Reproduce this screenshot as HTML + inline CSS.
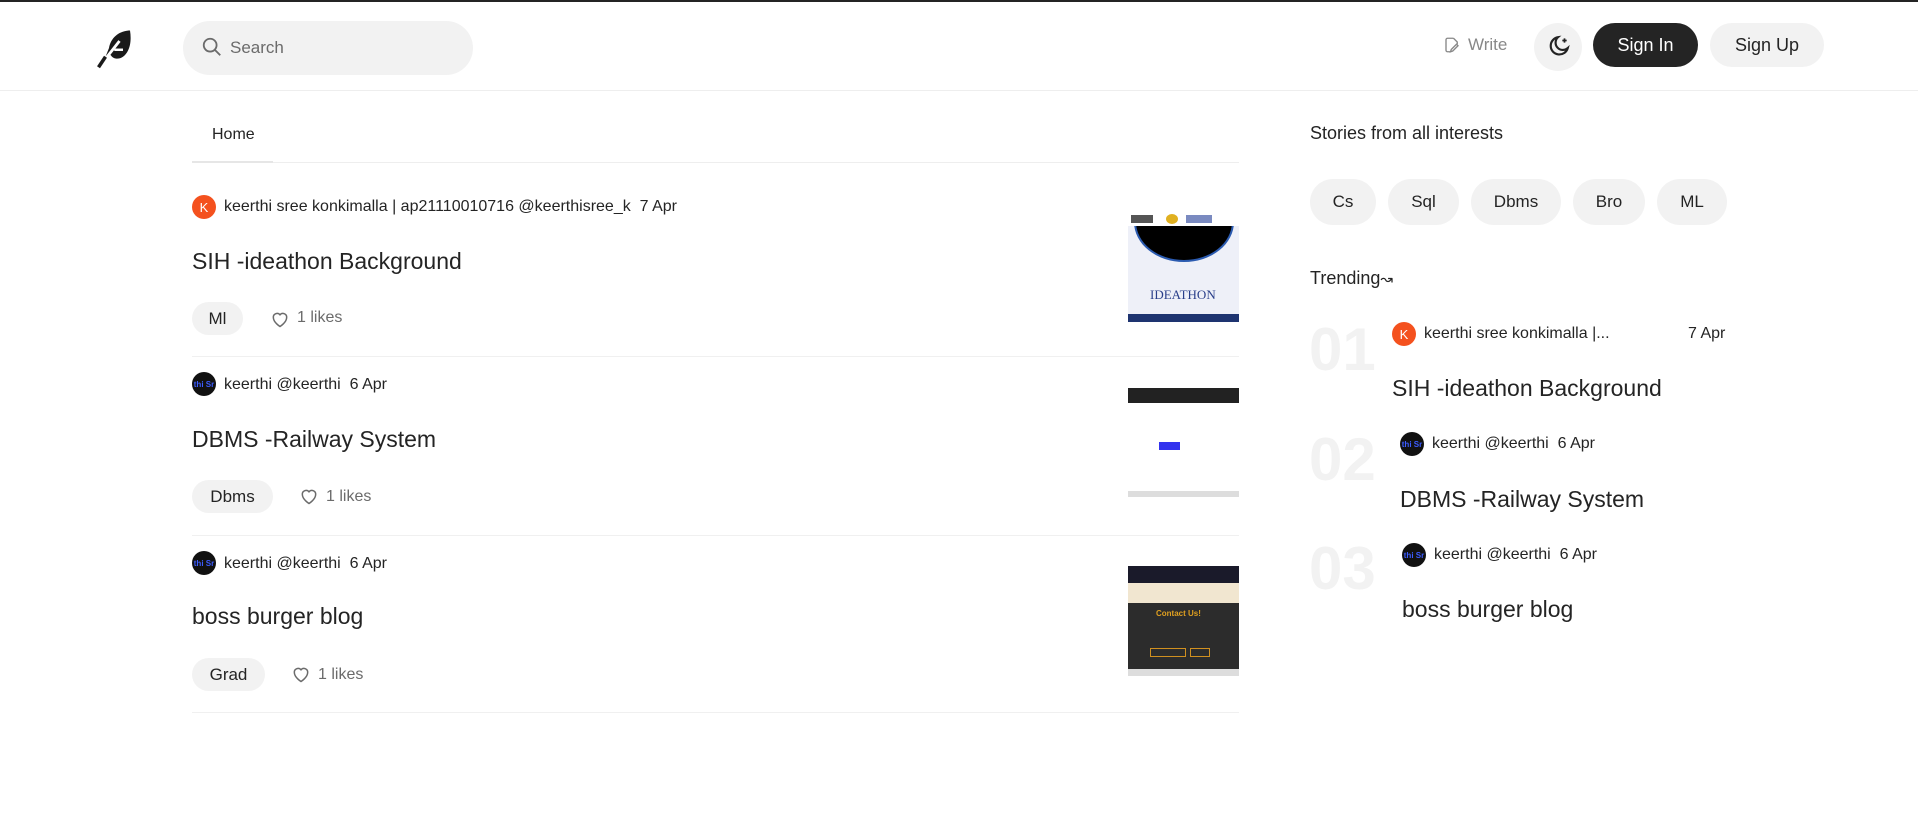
<!DOCTYPE html>
<html><head><meta charset="utf-8"><style>
*{margin:0;padding:0;box-sizing:border-box}
body{width:1918px;height:840px;background:#fff;font-family:"Liberation Sans",sans-serif;color:#242424;position:relative;overflow:hidden}
.a{position:absolute;white-space:nowrap}
.pill{position:absolute;background:#f2f2f2;border-radius:24px;display:flex;align-items:center;justify-content:center;color:#242424}
.av{position:absolute;width:24px;height:24px;border-radius:50%}
.k{background:#f4511e;color:#fff;font-size:13px;display:flex;align-items:center;justify-content:center}
.d{background:#111;color:#3c5cff;font-size:8px;font-weight:bold;display:flex;align-items:center;justify-content:center;overflow:hidden}
.meta{font-size:16px;color:#242424}
.title{font-size:23px;color:#242424}
.sep{position:absolute;left:192px;width:1047px;height:1px;background:#f0f0f0}
.big{position:absolute;font-size:60px;font-weight:bold;color:#f2f2f2;left:1309px}
</style></head><body>
<div class="a" style="left:0;top:0;width:1918px;height:2px;background:#242424"></div>
<svg class="a" style="left:95px;top:27px" width="42" height="42" viewBox="0 0 24 24"><path d="M20 2c-6 0-11 4-12 10l-2 5 3-1c1 2 4 3 7 1 4-3 5-9 4-15z" fill="#1a1a1a"/><path d="M3 22 L14 8" stroke="#fff" stroke-width="1.6"/><path d="M2 23 L6 17" stroke="#1a1a1a" stroke-width="2"/><path d="M11 13h5" stroke="#fff" stroke-width="1.4"/></svg>
<div class="a" style="left:183px;top:21px;width:290px;height:54px;border-radius:27px;background:#f2f2f2"></div>
<svg class="a" style="left:201px;top:36px" width="22" height="22" viewBox="0 0 24 24" fill="none" stroke="#6b6b6b" stroke-width="2"><circle cx="10" cy="10" r="7"/><path d="M15 15l6 6"/></svg>
<div class="a" style="left:230px;top:38px;font-size:17px;color:#6b6b6b">Search</div>
<svg class="a" style="left:1443px;top:35px" width="18" height="20" viewBox="0 0 24 24" fill="none" stroke="#888" stroke-width="1.8"><path d="M14 3H6a2 2 0 0 0-2 2v14a2 2 0 0 0 2 2h4"/><path d="M14 3l5 5v3"/><path d="M20 13l-7 7-3 1 1-3 7-7z"/></svg>
<div class="a" style="left:1468px;top:35px;font-size:17px;color:#888">Write</div>
<div class="a" style="left:1534px;top:23px;width:48px;height:48px;border-radius:50%;background:#f2f2f2"></div>
<svg class="a" style="left:1545px;top:34px" width="26" height="26" viewBox="0 0 24 24" fill="none" stroke="#242424" stroke-width="2"><path d="M12 3a8 8 0 1 0 9 10 6 6 0 0 1-9-10z"/><path d="M18 4v4M16 6h4" stroke-width="1.6"/></svg>
<div class="pill" style="left:1593px;top:23px;width:105px;height:44px;background:#242424;color:#fff;font-size:18px">Sign In</div>
<div class="pill" style="left:1710px;top:23px;width:114px;height:44px;font-size:18px">Sign Up</div>
<div class="a" style="left:0;top:90px;width:1918px;height:1px;background:#eee"></div>

<div class="a" style="left:212px;top:126px;font-size:16px">Home</div>
<div class="a" style="left:192px;top:162px;width:1047px;height:1px;background:#eee"></div>
<div class="a" style="left:192px;top:161px;width:81px;height:2px;background:#e6e6e6"></div>

<div class="av k" style="left:192px;top:195px">K</div>
<div class="a meta" style="left:224px;top:198px">keerthi sree konkimalla | ap21110010716 @keerthisree_k&nbsp; 7 Apr</div>
<div class="a title" style="left:192px;top:248px">SIH -ideathon Background</div>
<div class="pill" style="left:192px;top:302px;width:51px;height:33px;font-size:17px">Ml</div>
<svg class="a" style="left:270px;top:309px" width="20" height="20" viewBox="0 0 24 24" fill="none" stroke="#6b6b6b" stroke-width="1.8"><path d="M12 21s-8-5-8-11a4.5 4.5 0 0 1 8-3 4.5 4.5 0 0 1 8 3c0 6-8 11-8 11z"/></svg>
<div class="a" style="left:297px;top:309px;font-size:16px;color:#6b6b6b">1 likes</div>
<div class="a" style="left:1128px;top:212px;width:111px;height:110px;background:#eef0f8;overflow:hidden">
<div class="a" style="left:6px;top:-30px;width:100px;height:80px;border-radius:50%;background:#000;border:2px solid #2b5bb0"></div>
<div class="a" style="left:0;top:0;width:111px;height:14px;background:#fff"></div>
<div class="a" style="left:3px;top:3px;width:22px;height:8px;background:#555"></div>
<div class="a" style="left:38px;top:2px;width:12px;height:10px;background:#e0b020;border-radius:50%"></div>
<div class="a" style="left:58px;top:3px;width:26px;height:8px;background:#7a8ac0"></div>
<div class="a" style="left:22px;top:75px;font-family:'Liberation Serif',serif;font-size:13px;color:#2a3f8a">IDEATHON</div>
<div class="a" style="left:0;top:102px;width:111px;height:8px;background:#1e3470"></div></div>
<div class="sep" style="top:356px"></div>

<div class="av d" style="left:192px;top:372px">thi Sr</div>
<div class="a meta" style="left:224px;top:376px">keerthi @keerthi&nbsp; 6 Apr</div>
<div class="a title" style="left:192px;top:426px">DBMS -Railway System</div>
<div class="pill" style="left:192px;top:480px;width:81px;height:33px;font-size:17px">Dbms</div>
<svg class="a" style="left:299px;top:486px" width="20" height="20" viewBox="0 0 24 24" fill="none" stroke="#6b6b6b" stroke-width="1.8"><path d="M12 21s-8-5-8-11a4.5 4.5 0 0 1 8-3 4.5 4.5 0 0 1 8 3c0 6-8 11-8 11z"/></svg>
<div class="a" style="left:326px;top:488px;font-size:16px;color:#6b6b6b">1 likes</div>
<div class="a" style="left:1128px;top:388px;width:111px;height:112px;background:#fff;overflow:hidden">
<div class="a" style="left:0;top:0;width:111px;height:15px;background:#222"></div>
<div class="a" style="left:31px;top:54px;width:21px;height:8px;background:#3333ee"></div>
<div class="a" style="left:0;top:103px;width:111px;height:6px;background:#ddd"></div></div>
<div class="sep" style="top:535px"></div>

<div class="av d" style="left:192px;top:551px">thi Sr</div>
<div class="a meta" style="left:224px;top:555px">keerthi @keerthi&nbsp; 6 Apr</div>
<div class="a title" style="left:192px;top:603px">boss burger blog</div>
<div class="pill" style="left:192px;top:658px;width:73px;height:33px;font-size:17px">Grad</div>
<svg class="a" style="left:291px;top:664px" width="20" height="20" viewBox="0 0 24 24" fill="none" stroke="#6b6b6b" stroke-width="1.8"><path d="M12 21s-8-5-8-11a4.5 4.5 0 0 1 8-3 4.5 4.5 0 0 1 8 3c0 6-8 11-8 11z"/></svg>
<div class="a" style="left:318px;top:666px;font-size:16px;color:#6b6b6b">1 likes</div>
<div class="a" style="left:1128px;top:566px;width:111px;height:110px;background:#2c2c2c;overflow:hidden">
<div class="a" style="left:0;top:0;width:111px;height:17px;background:#1a1a2a"></div>
<div class="a" style="left:0;top:17px;width:111px;height:20px;background:#f1e6d0"></div>
<div class="a" style="left:28px;top:43px;font-size:8px;font-weight:bold;color:#e0a020">Contact Us!</div>
<div class="a" style="left:22px;top:82px;width:36px;height:9px;border:1px solid #d09020"></div>
<div class="a" style="left:62px;top:82px;width:20px;height:9px;border:1px solid #d09020"></div>
<div class="a" style="left:0;top:103px;width:111px;height:7px;background:#ddd"></div></div>
<div class="sep" style="top:712px"></div>

<div class="a" style="left:1310px;top:123px;font-size:18px">Stories from all interests</div>
<div class="pill" style="left:1310px;top:179px;width:66px;height:46px;font-size:17px">Cs</div>
<div class="pill" style="left:1388px;top:179px;width:71px;height:46px;font-size:17px">Sql</div>
<div class="pill" style="left:1471px;top:179px;width:90px;height:46px;font-size:17px">Dbms</div>
<div class="pill" style="left:1573px;top:179px;width:72px;height:46px;font-size:17px">Bro</div>
<div class="pill" style="left:1657px;top:179px;width:70px;height:46px;font-size:17px">ML</div>
<div class="a" style="left:1310px;top:268px;font-size:18px">Trending<span style="font-size:15px">↝</span></div>

<div class="big" style="top:315px">01</div>
<div class="av k" style="left:1392px;top:322px">K</div>
<div class="a meta" style="left:1424px;top:325px">keerthi sree konkimalla |...</div>
<div class="a meta" style="left:1688px;top:325px">7 Apr</div>
<div class="a title" style="left:1392px;top:375px">SIH -ideathon Background</div>

<div class="big" style="top:425px">02</div>
<div class="av d" style="left:1400px;top:432px">thi Sr</div>
<div class="a meta" style="left:1432px;top:435px">keerthi @keerthi&nbsp; 6 Apr</div>
<div class="a title" style="left:1400px;top:486px">DBMS -Railway System</div>

<div class="big" style="top:534px">03</div>
<div class="av d" style="left:1402px;top:543px">thi Sr</div>
<div class="a meta" style="left:1434px;top:546px">keerthi @keerthi&nbsp; 6 Apr</div>
<div class="a title" style="left:1402px;top:596px">boss burger blog</div>
</body></html>
